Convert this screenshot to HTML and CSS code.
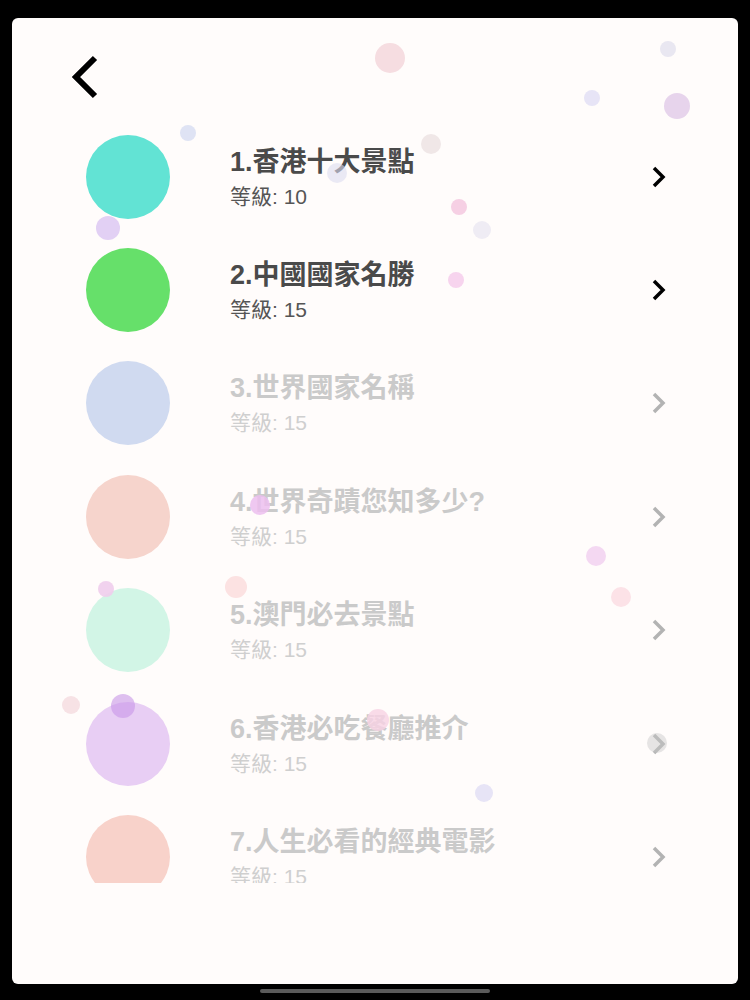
FILE: index.html
```html
<!DOCTYPE html>
<html lang="zh-Hant">
<head>
<meta charset="utf-8">
<title>Levels</title>
<link rel="stylesheet" href="styles.css">
</head>
<body>
<div class="screen">
  <div class="panel">
    <header class="header">
      <svg class="back" width="34" height="48" viewBox="0 0 34 48">
        <polyline points="28,5 9,24 28,43" fill="none" stroke="#000" stroke-width="6" stroke-linecap="butt" stroke-linejoin="miter"/>
      </svg>
    </header>
    <ul class="list">
      <li class="row">
        <span class="dot c1"></span>
        <div class="info"><div class="title">1.香港十大景點</div><div class="level">等級: 10</div></div>
        <svg class="chev" width="16" height="24" viewBox="0 0 16 24"><polyline points="3,3 12,12 3,21" fill="none" stroke-width="3.5"/></svg>
      </li>
      <li class="row">
        <span class="dot c2"></span>
        <div class="info"><div class="title">2.中國國家名勝</div><div class="level">等級: 15</div></div>
        <svg class="chev" width="16" height="24" viewBox="0 0 16 24"><polyline points="3,3 12,12 3,21" fill="none" stroke-width="3.5"/></svg>
      </li>
      <li class="row locked">
        <span class="dot c3"></span>
        <div class="info"><div class="title">3.世界國家名稱</div><div class="level">等級: 15</div></div>
        <svg class="chev" width="16" height="24" viewBox="0 0 16 24"><polyline points="3,3 12,12 3,21" fill="none" stroke-width="3.5"/></svg>
      </li>
      <li class="row locked">
        <span class="dot c4"></span>
        <div class="info"><div class="title">4.世界奇蹟您知多少?</div><div class="level">等級: 15</div></div>
        <svg class="chev" width="16" height="24" viewBox="0 0 16 24"><polyline points="3,3 12,12 3,21" fill="none" stroke-width="3.5"/></svg>
      </li>
      <li class="row locked">
        <span class="dot c5"></span>
        <div class="info"><div class="title">5.澳門必去景點</div><div class="level">等級: 15</div></div>
        <svg class="chev" width="16" height="24" viewBox="0 0 16 24"><polyline points="3,3 12,12 3,21" fill="none" stroke-width="3.5"/></svg>
      </li>
      <li class="row locked">
        <span class="dot c6"></span>
        <div class="info"><div class="title">6.香港必吃餐廳推介</div><div class="level">等級: 15</div></div>
        <svg class="chev" width="16" height="24" viewBox="0 0 16 24"><polyline points="3,3 12,12 3,21" fill="none" stroke-width="3.5"/></svg>
      </li>
      <li class="row locked">
        <span class="dot c7"></span>
        <div class="info"><div class="title">7.人生必看的經典電影</div><div class="level">等級: 15</div></div>
        <svg class="chev" width="16" height="24" viewBox="0 0 16 24"><polyline points="3,3 12,12 3,21" fill="none" stroke-width="3.5"/></svg>
      </li>
    </ul>
    <div class="bubbles">
      <span class="b" style="left:363px;top:25px;width:30px;height:30px;background:#f6dde1"></span>
      <span class="b" style="left:648px;top:23px;width:16px;height:16px;background:#e9e7f1"></span>
      <span class="b" style="left:572px;top:72px;width:16px;height:16px;background:#e7e4f6"></span>
      <span class="b" style="left:652px;top:75px;width:26px;height:26px;background:#e7d4ec"></span>
      <span class="b" style="left:168px;top:107px;width:16px;height:16px;background:#dfe3f4"></span>
      <span class="b" style="left:409px;top:116px;width:20px;height:20px;background:#f0e7e7"></span>
      <span class="b" style="left:315px;top:145px;width:20px;height:20px;background:rgba(220,220,240,0.6)"></span>
      <span class="b" style="left:439px;top:181px;width:16px;height:16px;background:#f6d0e4"></span>
      <span class="b" style="left:461px;top:203px;width:18px;height:18px;background:#efecf4"></span>
      <span class="b" style="left:84px;top:198px;width:24px;height:24px;background:#e2d0f4"></span>
      <span class="b" style="left:436px;top:254px;width:16px;height:16px;background:#f7d4ee"></span>
      <span class="b" style="left:238px;top:477px;width:20px;height:20px;background:rgba(236,190,238,0.85)"></span>
      <span class="b" style="left:574px;top:528px;width:20px;height:20px;background:#f4d8f2"></span>
      <span class="b" style="left:213px;top:558px;width:22px;height:22px;background:#fce2e2"></span>
      <span class="b" style="left:599px;top:569px;width:20px;height:20px;background:#fce2e7"></span>
      <span class="b" style="left:86px;top:563px;width:16px;height:16px;background:rgba(240,205,236,0.9)"></span>
      <span class="b" style="left:50px;top:678px;width:18px;height:18px;background:#f7e2e5"></span>
      <span class="b" style="left:99px;top:676px;width:24px;height:24px;background:rgba(200,150,232,0.6)"></span>
      <span class="b" style="left:355px;top:691px;width:22px;height:22px;background:rgba(248,210,228,0.8)"></span>
      <span class="b" style="left:463px;top:766px;width:18px;height:18px;background:#e7e4f6"></span>
      <span class="b" style="left:635px;top:715px;width:20px;height:20px;background:rgba(200,200,200,0.45)"></span>
    </div>
  </div>
  <div class="home-bar"></div>
</div>
</body>
</html>
```

FILE: styles.css
```css
html, body {
  margin: 0;
  padding: 0;
  background: #000;
}
body {
  font-family: "Liberation Sans", "Noto Sans CJK TC", sans-serif;
}
.screen {
  width: 750px;
  height: 1000px;
  padding-top: 18px;
  box-sizing: border-box;
  display: flex;
  flex-direction: column;
  align-items: center;
}
.panel {
  position: relative;
  width: 726px;
  height: 966px;
  background: #fffcfb;
  border-radius: 6px;
  overflow: hidden;
}
.header {
  height: 102px;
  display: flex;
  align-items: flex-start;
  padding-left: 55px;
  box-sizing: border-box;
}
.back {
  display: block;
  margin-top: 35px;
}
.list {
  list-style: none;
  margin: 0;
  padding: 0;
  height: 763px;
  overflow: hidden;
}
.row {
  height: 113.4px;
  display: flex;
  align-items: center;
  padding-left: 74px;
  padding-right: 71px;
}
.dot {
  width: 84px;
  height: 84px;
  border-radius: 50%;
  flex: none;
}
.c1 { background: #62e3d4; }
.c2 { background: #66e06a; }
.c3 { background: #d0daf0; }
.c4 { background: #f6d4cc; }
.c5 { background: #d2f5e6; }
.c6 { background: #e8cef4; }
.c7 { background: #f8d2ca; }
.info {
  flex: 1;
  margin-left: 60px;
  margin-top: 2px;
}
.title {
  font-size: 27px;
  font-weight: bold;
  line-height: 32px;
  color: #4a4a4a;
  white-space: nowrap;
}
.level {
  margin-top: 6px;
  font-size: 21px;
  line-height: 26px;
  color: #555;
}
.chev {
  display: block;
  flex: none;
  stroke: #000;
}
.locked .title { color: #cacaca; }
.locked .level { color: #cfcfcf; }
.locked .chev { stroke: #b3b3b3; }
.bubbles {
  position: absolute;
  inset: 0;
  pointer-events: none;
}
.b {
  position: absolute;
  border-radius: 50%;
}
.home-bar {
  margin-top: 5px;
  width: 230px;
  height: 4px;
  border-radius: 2px;
  background: #5a5a5a;
}
```
